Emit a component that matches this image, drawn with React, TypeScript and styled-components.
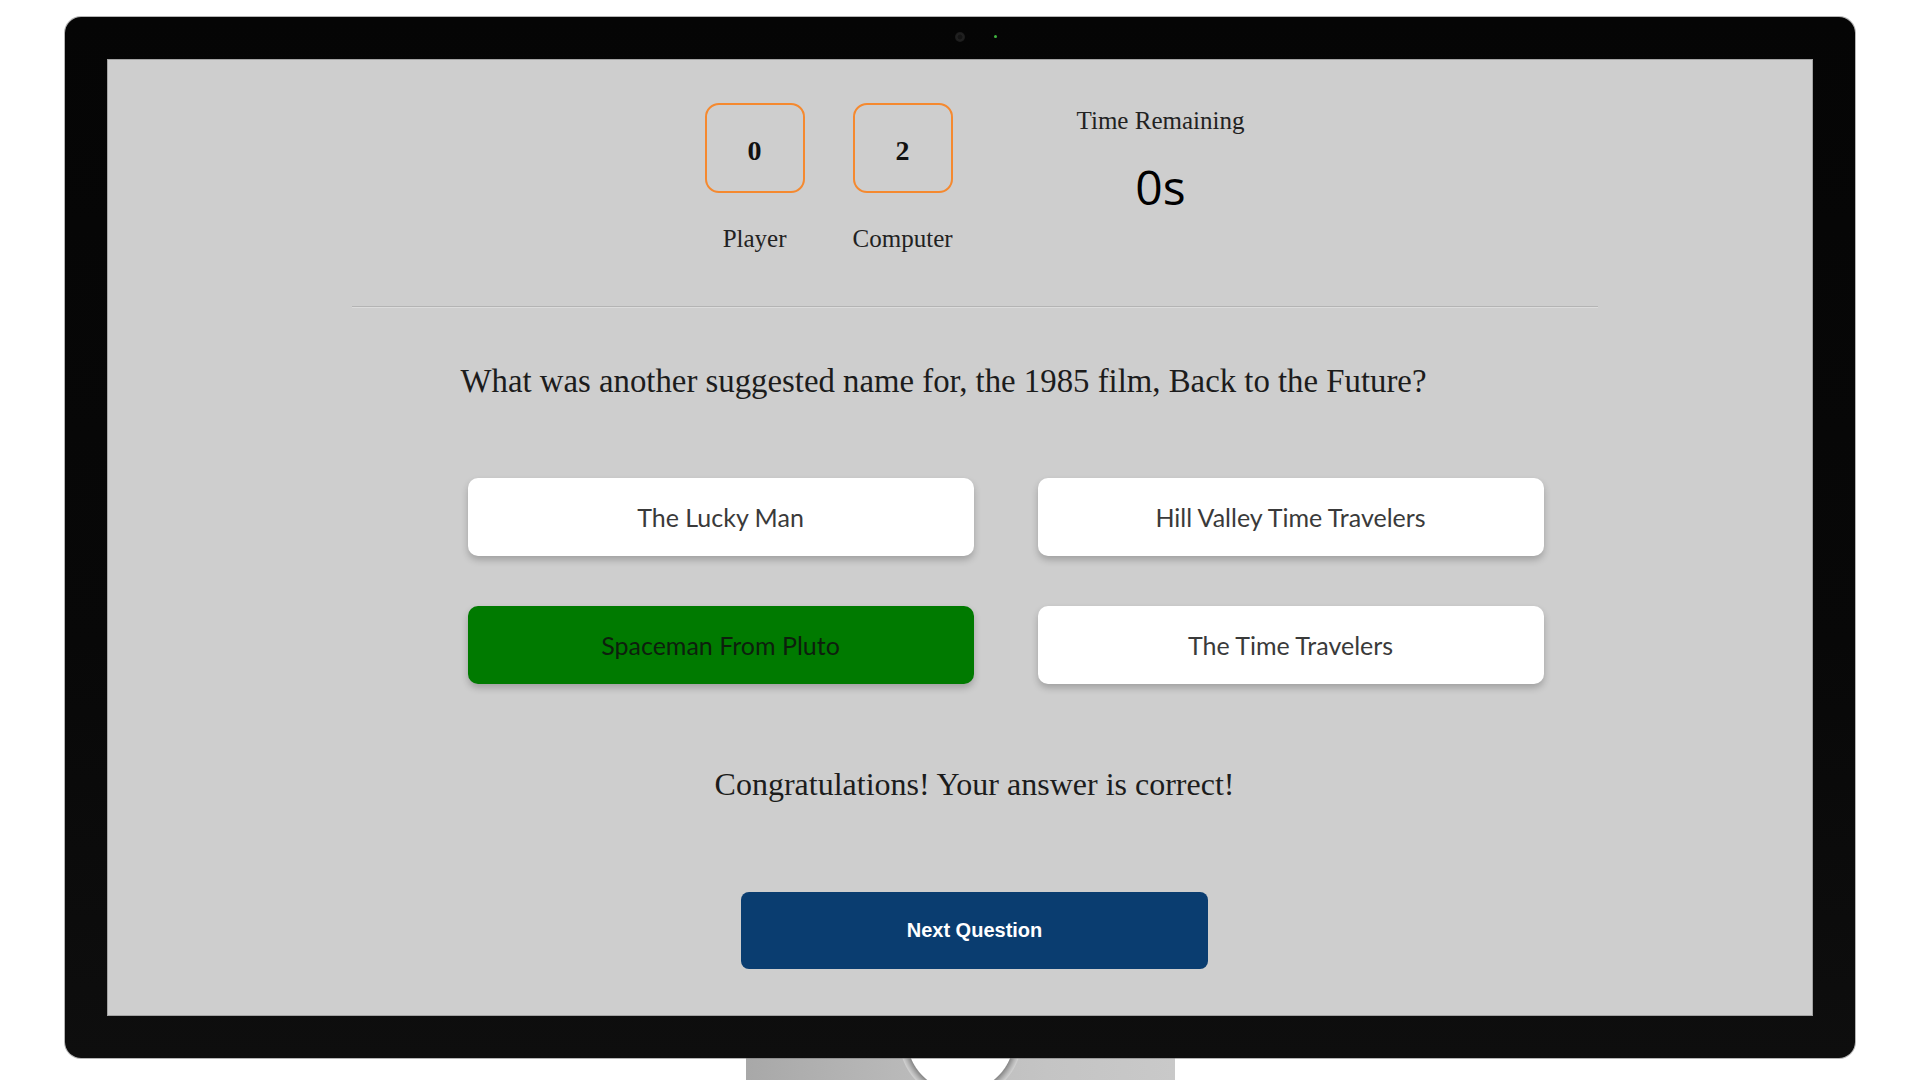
import React from "react";
import styled, { createGlobalStyle } from "styled-components";

const GlobalStyle = createGlobalStyle`
  html, body {
    margin: 0;
    padding: 0;
    background: #ffffff;
    overflow: hidden;
  }
  * { box-sizing: border-box; }
`;

const Page = styled.div`
  width: 1920px;
  height: 1080px;
  display: flex;
  flex-direction: column;
  align-items: center;
`;

const Monitor = styled.div`
  position: relative;
  margin-top: 17px;
  width: 1790px;
  height: 1041px;
  padding: 42px;
  border-radius: 16px;
  background: linear-gradient(to bottom, #050505 0%, #080808 60%, #0e0e0e 100%);
  box-shadow: 0 0 0 1px rgba(120, 120, 120, 0.55);
`;

const Camera = styled.span`
  position: absolute;
  top: 15px;
  left: calc(50% - 5px);
  width: 10px;
  height: 10px;
  border-radius: 50%;
  background: radial-gradient(circle at 50% 50%, #141414 0 2px, #222 3px, #1a1a1a 5px);
`;

const Led = styled.span`
  position: absolute;
  top: 18px;
  left: calc(50% + 34px);
  width: 3px;
  height: 3px;
  border-radius: 50%;
  background: #3fb43f;
`;

const Screen = styled.div`
  width: 100%;
  height: 100%;
  background: #cecece;
  border: 1px solid #a3a3a3;
  padding: 43px 0 0 29px;
  display: flex;
  flex-direction: column;
  align-items: center;
`;

const Scoreboard = styled.div`
  display: flex;
  align-items: flex-start;
  gap: 124px;
`;

const Scores = styled.div`
  display: flex;
  gap: 48px;
`;

const ScoreItem = styled.div`
  display: flex;
  flex-direction: column;
  align-items: center;
  width: 100px;
`;

const ScoreBox = styled.div`
  width: 100px;
  height: 90px;
  border: 2px solid #f5892f;
  border-radius: 14px;
  padding-top: 5px;
  display: flex;
  align-items: center;
  justify-content: center;
  font-family: "Liberation Serif", "Times New Roman", serif;
  font-weight: 700;
  font-size: 28px;
  color: #111;
`;

const ScoreLabel = styled.div`
  margin-top: 32px;
  font-family: "Liberation Serif", "Times New Roman", serif;
  font-size: 25px;
  line-height: 28px;
  color: #222;
  white-space: nowrap;
`;

const TimeBlock = styled.div`
  display: flex;
  flex-direction: column;
  align-items: center;
`;

const TimeLabel = styled.div`
  font-family: "Liberation Serif", "Times New Roman", serif;
  font-size: 25px;
  line-height: 35px;
  color: #222;
  white-space: nowrap;
`;

const TimeValue = styled.div`
  margin-top: 25px;
  font-family: "Open Sans", "Noto Sans", sans-serif;
  font-size: 48px;
  line-height: 48px;
  color: #000;
`;

const Divider = styled.div`
  margin-top: 53px;
  width: 1246px;
  height: 2px;
  border-top: 1px solid #b4b4b4;
  border-bottom: 1px solid #dcdcdc;
`;

const Question = styled.h2`
  margin: 53px 62px 0 0;
  font-family: "Liberation Serif", "Times New Roman", serif;
  font-weight: 400;
  font-size: 32.8px;
  line-height: 40px;
  color: #1c1c1c;
  text-align: center;
  white-space: nowrap;
`;

const Answers = styled.div`
  margin: 77px 0 0 62px;
  display: grid;
  grid-template-columns: 506px 506px;
  column-gap: 64px;
  row-gap: 50px;
`;

const AnswerButton = styled.button<{ $correct?: boolean }>`
  height: 78px;
  border: none;
  border-radius: 10px;
  background: ${(p) => (p.$correct ? "#007a00" : "#ffffff")};
  color: ${(p) => (p.$correct ? "#0d1f0d" : "#3a3a3a")};
  font-family: Lato, "Open Sans", sans-serif;
  font-size: 25px;
  box-shadow: 0 4px 7px rgba(0, 0, 0, 0.22);
  cursor: pointer;
`;

const Feedback = styled.p`
  margin: 82px 0 0 0;
  font-family: "Liberation Serif", "Times New Roman", serif;
  font-size: 32px;
  line-height: 36px;
  color: #1c1c1c;
  white-space: nowrap;
`;

const NextButton = styled.button`
  margin-top: 90px;
  width: 467px;
  height: 77px;
  border: none;
  border-radius: 8px;
  background: #0a3d70;
  color: #ffffff;
  font-family: "Liberation Sans", Arial, sans-serif;
  font-weight: 700;
  font-size: 20px;
  cursor: pointer;
`;

const Stand = styled.div`
  margin-top: -1px;
  width: 429px;
  height: 23px;
  background:
    radial-gradient(circle at 50% -19px, #ffffff 0 53px, #8a8a8a 54px, #b5b5b5 58px, #cfcfcf 61px, transparent 62px),
    linear-gradient(to right, #a8a8a8 0%, #bdbdbd 45%, #c4c4c4 70%, #c9c9c9 100%);
`;

const answers = [
  { text: "The Lucky Man", correct: false },
  { text: "Hill Valley Time Travelers", correct: false },
  { text: "Spaceman From Pluto", correct: true },
  { text: "The Time Travelers", correct: false },
];

export default function App() {
  return (
    <>
      <GlobalStyle />
      <Page>
        <Monitor>
          <Camera />
          <Led />
          <Screen>
            <Scoreboard>
              <Scores>
                <ScoreItem>
                  <ScoreBox>0</ScoreBox>
                  <ScoreLabel>Player</ScoreLabel>
                </ScoreItem>
                <ScoreItem>
                  <ScoreBox>2</ScoreBox>
                  <ScoreLabel>Computer</ScoreLabel>
                </ScoreItem>
              </Scores>
              <TimeBlock>
                <TimeLabel>Time Remaining</TimeLabel>
                <TimeValue>0s</TimeValue>
              </TimeBlock>
            </Scoreboard>
            <Divider />
            <Question>What was another suggested name for, the 1985 film, Back to the Future?</Question>
            <Answers>
              {answers.map((a) => (
                <AnswerButton key={a.text} $correct={a.correct}>
                  {a.text}
                </AnswerButton>
              ))}
            </Answers>
            <Feedback>Congratulations! Your answer is correct!</Feedback>
            <NextButton>Next Question</NextButton>
          </Screen>
        </Monitor>
        <Stand />
      </Page>
    </>
  );
}
